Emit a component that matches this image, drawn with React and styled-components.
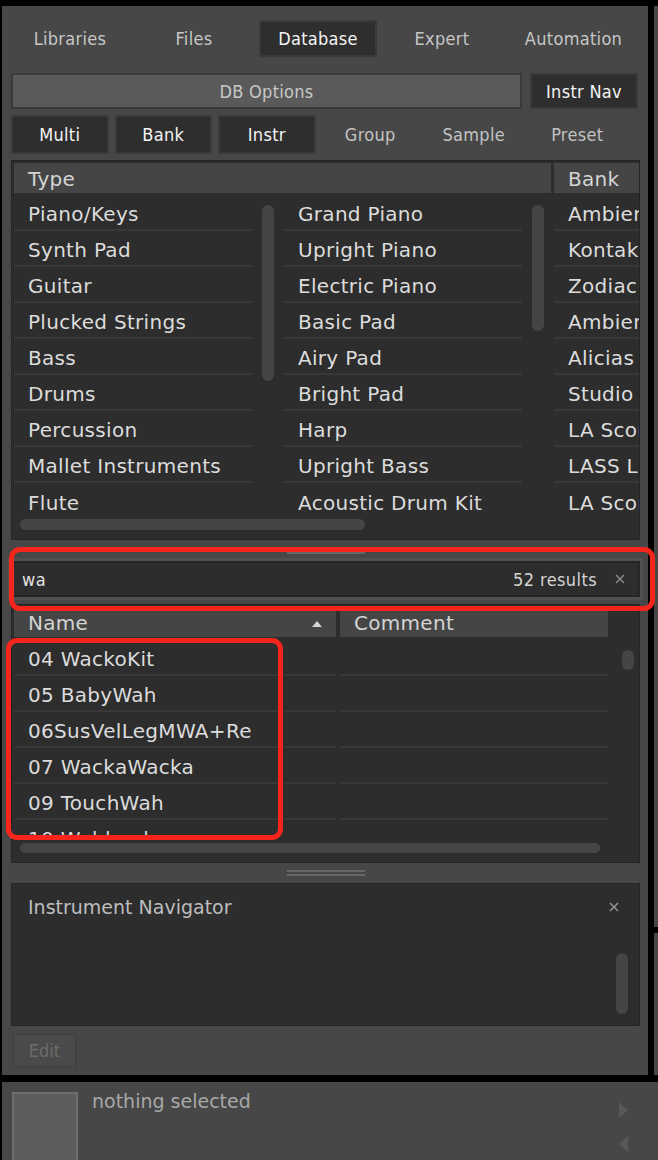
import React from 'react';
import styled, { createGlobalStyle } from 'styled-components';

const Global = createGlobalStyle`
  html, body { margin: 0; padding: 0; background: #000; }
  body { width: 658px; height: 1160px; overflow: hidden; }
`;

const UI = `"DejaVu Sans Condensed", "DejaVu Sans", sans-serif`;
const LIST = `"DejaVu Sans", "Liberation Sans", sans-serif`;

const Page = styled.div`
  position: relative;
  width: 658px;
  height: 1160px;
  background: #000;
  overflow: hidden;
`;

const TopArea = styled.div`
  display: flex;
  padding-top: 6px;
  height: 1069px;
`;

const MainPanel = styled.div`
  margin-left: 2px;
  width: 646px;
  box-sizing: border-box;
  background: #474747;
  padding: 14px 8px 0 9px;
  display: flex;
  flex-direction: column;
`;

const SideStrip = styled.div`
  margin-left: 6px;
  width: 4px;
  display: flex;
  flex-direction: column;
  gap: 6px;
`;

const StripPiece = styled.div`
  background: #474747;
  height: ${p => p.$h}px;
`;

/* ---------- top rows ---------- */
const TabRow = styled.div`
  display: grid;
  grid-template-columns: repeat(4, 118px) 1fr;
  column-gap: 6px;
  height: 37px;
`;

const Tab = styled.div`
  display: flex;
  align-items: center;
  justify-content: center;
  box-sizing: border-box;
  font-family: ${UI};
  font-size: 18px;
  letter-spacing: 0.3px;
  color: ${p => (p.$active ? '#f4f4f4' : '#c6c6c6')};
  background: ${p => (p.$active ? '#2e2e2e' : 'transparent')};
  border: 2px solid ${p => (p.$active ? '#3a3a3a' : 'transparent')};
`;

const OptionsRow = styled.div`
  display: grid;
  grid-template-columns: 1fr 108px;
  column-gap: 8px;
  height: 36px;
  margin: 16px 2px 0 0;
`;

const Button = styled.div`
  display: flex;
  align-items: center;
  justify-content: center;
  box-sizing: border-box;
  font-family: ${UI};
  font-size: 18px;
  letter-spacing: 0.3px;
  color: ${p => (p.$dark ? '#f4f4f4' : p.$flat ? '#c2c2c2' : '#c8c8c8')};
  background: ${p => (p.$dark ? '#2e2e2e' : p.$flat ? 'transparent' : '#5a5a5a')};
  border: 2px solid ${p => (p.$flat ? 'transparent' : '#3a3a3a')};
`;

const LevelRow = styled.div`
  display: grid;
  grid-template-columns: repeat(6, 97.5px);
  column-gap: 6px;
  height: 39px;
  margin-top: 6px;
`;

/* ---------- tables ---------- */
const DarkBox = styled.div`
  box-sizing: border-box;
  background: #2d2d2d;
  border: 1px solid #242424;
  padding: 2px 0 0 2px;
  height: ${p => p.$h}px;
  margin-top: ${p => p.$mt || 0}px;
  display: flex;
  flex-direction: column;
  overflow: hidden;
`;

const HeaderRow = styled.div`
  display: grid;
  grid-template-columns: ${p => p.$cols};
  column-gap: ${p => p.$gap}px;
  height: 30px;
  flex-shrink: 0;
  margin-right: ${p => p.$mr || 0}px;
`;

const HeaderCell = styled.div`
  display: flex;
  align-items: center;
  justify-content: space-between;
  background: #454545;
  padding: 1px 14px 0;
  font-family: ${LIST};
  font-size: 20px;
  letter-spacing: 0.3px;
  color: #d4d4d4;
  white-space: nowrap;
  overflow: hidden;
`;

const SortArrow = styled.span`
  width: 0;
  height: 0;
  border-left: 5px solid transparent;
  border-right: 5px solid transparent;
  border-bottom: 6px solid #d6d6d6;
  margin-top: 2px;
`;

const Body = styled.div`
  display: flex;
  gap: ${p => p.$gap || 0}px;
  height: ${p => p.$h}px;
  margin-top: ${p => p.$mt}px;
  overflow: hidden;
  flex-shrink: 0;
`;

const List = styled.div`
  width: ${p => p.$w}px;
  flex-shrink: 0;
  display: flex;
  flex-direction: column;
`;

const Row = styled.div`
  height: 36px;
  flex-shrink: 0;
  box-sizing: border-box;
  border-bottom: 2px solid #383838;
  padding: 3px 0 0 14px;
  display: flex;
  align-items: center;
  font-family: ${LIST};
  font-size: 20px;
  letter-spacing: 0.3px;
  color: #dcdcdc;
  white-space: nowrap;
  overflow: hidden;
  &:last-child { border-bottom: ${p => (p.$keepLast ? '2px solid #383838' : 'none')}; }
`;

const Track = styled.div`
  width: ${p => p.$w}px;
  flex-shrink: 0;
  display: flex;
  flex-direction: column;
`;

const VThumb = styled.div`
  margin: 10px 0 0 10px;
  width: 12px;
  height: ${p => p.$h}px;
  border-radius: 6px;
  background: #454545;
`;

const HScrollZone = styled.div`
  height: ${p => p.$h}px;
  flex-shrink: 0;
`;

const HThumb = styled.div`
  margin: ${p => p.$mt}px 0 0 6px;
  width: ${p => p.$w}px;
  height: ${p => p.$th}px;
  border-radius: 6px;
  background: #454545;
`;

/* ---------- splitter / search ---------- */
const Splitter = styled.div`
  height: ${p => p.$h}px;
  display: flex;
  justify-content: center;
  align-items: center;
  flex-shrink: 0;
`;

const Handle = styled.div`
  width: 78px;
  height: 6px;
  border-top: 2px solid #676767;
  border-bottom: 2px solid #676767;
  box-sizing: border-box;
`;

const SearchBox = styled.div`
  box-sizing: border-box;
  height: 36px;
  background: #2d2d2d;
  border: 2px solid #262626;
  box-shadow: 0 0 0 3px #505050;
  display: flex;
  align-items: center;
  padding: 0 13px 0 9px;
  font-family: ${UI};
  font-size: 18px;
  letter-spacing: 0.4px;
  color: #e2e2e2;
`;

const SearchText = styled.span`
  flex: 1;
`;

const ResultCount = styled.span`
  color: #d4d4d4;
  margin-right: 18px;
`;

const CloseIcon = ({ color = '#8c8c8c' }) => (
  <svg width="10" height="10" viewBox="0 0 10 10">
    <path d="M1 1 L9 9 M9 1 L1 9" stroke={color} strokeWidth="1.4" fill="none" />
  </svg>
);

/* ---------- navigator ---------- */
const NavHead = styled.div`
  display: flex;
  justify-content: space-between;
  align-items: center;
  padding: 11px 20px 0 14px;
  height: 20px;
  font-family: ${LIST};
  font-size: 19px;
  color: #bdbdbd;
`;

const NavThumb = styled.div`
  align-self: flex-end;
  margin: 36px 11px 0 0;
  width: 12px;
  height: 61px;
  border-radius: 6px;
  background: #454545;
`;

const EditButton = styled.div`
  margin-top: 7px;
  margin-left: 1px;
  width: 65px;
  height: 35px;
  box-sizing: border-box;
  background: #4a4a4a;
  border: 2px solid #424242;
  display: flex;
  align-items: center;
  justify-content: center;
  font-family: ${UI};
  font-size: 18px;
  color: #6c6c6c;
`;

/* ---------- bottom ---------- */
const BottomPanel = styled.div`
  margin: 7px 0 0 2px;
  height: 78px;
  background: #474747;
  display: flex;
  align-items: flex-start;
  overflow: hidden;
`;

const Swatch = styled.div`
  margin: 10px 0 0 10px;
  width: 66px;
  height: 80px;
  box-sizing: border-box;
  background: #5d5d5d;
  border: 2px solid #6e6e6e;
  flex-shrink: 0;
`;

const Status = styled.div`
  margin: 9px 0 0 14px;
  line-height: 20px;
  font-family: ${LIST};
  font-size: 19px;
  color: #a8a8a8;
  flex: 1;
`;

const Arrows = styled.div`
  margin: 20px 30px 0 0;
  display: flex;
  flex-direction: column;
  gap: 18px;
`;

const Annotation = styled.div`
  position: absolute;
  left: ${p => p.$x}px;
  top: ${p => p.$y}px;
  width: ${p => p.$w}px;
  height: ${p => p.$h}px;
  box-sizing: border-box;
  border: 5px solid #f7251c;
  border-radius: 11px;
  pointer-events: none;
`;

const types = ['Piano/Keys', 'Synth Pad', 'Guitar', 'Plucked Strings', 'Bass', 'Drums', 'Percussion', 'Mallet Instruments', 'Flute'];
const subtypes = ['Grand Piano', 'Upright Piano', 'Electric Piano', 'Basic Pad', 'Airy Pad', 'Bright Pad', 'Harp', 'Upright Bass', 'Acoustic Drum Kit'];
const banks = ['Ambient Piano', 'Kontakt Factory', 'Zodiac', 'Ambient', 'Alicias Keys', 'Studio Drummer', 'LA Scoring Strings', 'LASS Lite', 'LA Scoring Strings'];
const results = ['04 WackoKit', '05 BabyWah', '06SusVelLegMWA+Re', '07 WackaWacka', '09 TouchWah', '10 Wahlead'];

export default function App() {
  return (
    <Page>
      <Global />
      <TopArea>
        <MainPanel>
          <TabRow>
            <Tab>Libraries</Tab>
            <Tab>Files</Tab>
            <Tab $active>Database</Tab>
            <Tab>Expert</Tab>
            <Tab>Automation</Tab>
          </TabRow>

          <OptionsRow>
            <Button>DB Options</Button>
            <Button $dark>Instr Nav</Button>
          </OptionsRow>

          <LevelRow>
            <Button $dark>Multi</Button>
            <Button $dark>Bank</Button>
            <Button $dark>Instr</Button>
            <Button $flat>Group</Button>
            <Button $flat>Sample</Button>
            <Button $flat>Preset</Button>
          </LevelRow>

          <DarkBox $h={380} $mt={6}>
            <HeaderRow $cols="537px 1fr" $gap={3}>
              <HeaderCell>Type</HeaderCell>
              <HeaderCell>Bank</HeaderCell>
            </HeaderRow>
            <Body $h={324} $mt={2}>
              <List $w={238}>
                {types.map(t => <Row key={t}>{t}</Row>)}
              </List>
              <Track $w={32}><VThumb $h={176} /></Track>
              <List $w={238}>
                {subtypes.map(t => <Row key={t}>{t}</Row>)}
              </List>
              <Track $w={32}><VThumb $h={126} /></Track>
              <List $w={86}>
                {banks.map((t, i) => <Row key={i}>{t}</Row>)}
              </List>
            </Body>
            <HScrollZone $h={20}>
              <HThumb $mt={0} $w={345} $th={11} />
            </HScrollZone>
          </DarkBox>

          <Splitter $h={21}><Handle /></Splitter>

          <SearchBox>
            <SearchText>wa</SearchText>
            <ResultCount>52 results</ResultCount>
            <CloseIcon />
          </SearchBox>

          <DarkBox $h={259} $mt={7}>
            <HeaderRow $cols="322px 268px" $gap={4}>
              <HeaderCell>Name<SortArrow /></HeaderCell>
              <HeaderCell>Comment</HeaderCell>
            </HeaderRow>
            <Body $h={196} $mt={3} $gap={4}>
              <List $w={322}>
                {results.map(t => <Row key={t} $keepLast>{t}</Row>)}
              </List>
              <List $w={268}>
                {results.map(t => <Row key={t} $keepLast />)}
              </List>
              <Track $w={29}><VThumb $h={20} /></Track>
            </Body>
            <HScrollZone $h={26}>
              <HThumb $mt={7} $w={580} $th={10} />
            </HScrollZone>
          </DarkBox>

          <Splitter $h={20}><Handle /></Splitter>

          <DarkBox $h={143}>
            <NavHead>
              <span>Instrument Navigator</span>
              <CloseIcon color="#9a9a9a" />
            </NavHead>
            <NavThumb />
          </DarkBox>

          <EditButton>Edit</EditButton>
        </MainPanel>

        <SideStrip>
          <StripPiece $h={921} />
          <StripPiece $h={142} />
        </SideStrip>
      </TopArea>

      <BottomPanel>
        <Swatch />
        <Status>nothing selected</Status>
        <Arrows>
          <svg width="9" height="16" viewBox="0 0 9 16"><path d="M0 0 L9 8 L0 16 Z" fill="#575757" /></svg>
          <svg width="9" height="16" viewBox="0 0 9 16"><path d="M9 0 L0 8 L9 16 Z" fill="#575757" /></svg>
        </Arrows>
      </BottomPanel>

      <Annotation $x={9} $y={547} $w={646} $h={64} />
      <Annotation $x={6} $y={638} $w={277} $h={202} />
    </Page>
  );
}
